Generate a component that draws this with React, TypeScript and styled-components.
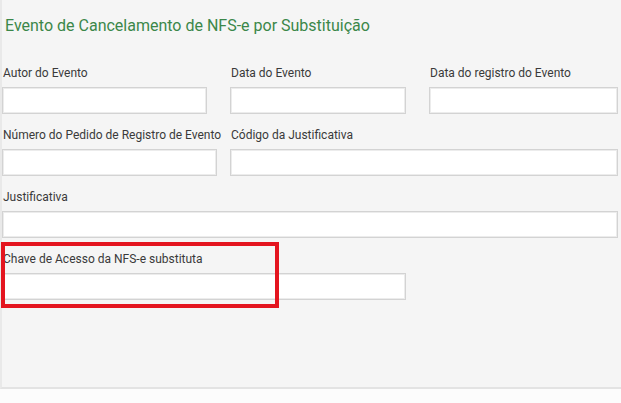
import React from 'react';
import styled, {createGlobalStyle} from 'styled-components';

const GlobalStyle = createGlobalStyle`
    html, body {
        margin: 0;
        padding: 0;
        background: #fcfcfc;
    }

    body {
        font-family: Roboto, "Liberation Sans", Arial, sans-serif;
    }
`;

const Panel = styled.section`
    box-sizing: border-box;
    height: 389px;
    padding-top: 16px;
    background-color: #f5f5f5;
    border-left: 2px solid #e9e9e9;
    border-bottom: 2px solid #e3e3e3;
`;

const Title = styled.h2`
    margin: 0 0 29px 3px;
    font-size: 16px;
    line-height: 20px;
    font-weight: 400;
    color: #3b8749;
`;

const Rows = styled.div`
    display: flex;
    flex-direction: column;
    gap: 13px;
`;

const Row = styled.div<{ $gap?: number }>`
    display: flex;
    gap: ${props => props.$gap ?? 0}px;
`;

const Field = styled.div<{ $width: number }>`
    position: relative;
    display: flex;
    flex-direction: column;
    gap: 6px;
    width: ${props => props.$width}px;
`;

const Label = styled.label`
    padding-left: 1px;
    font-size: 12px;
    line-height: 16px;
    color: #3a3a3a;
    white-space: nowrap;
`;

const Input = styled.input`
    box-sizing: border-box;
    height: 27px;
    width: 100%;
    margin: 0;
    padding: 0 6px;
    border: 1px solid #d3d3d3;
    box-shadow: inset 0 0 0 1px #ececec;
    background: #fff;
    outline: none;
`;

// highlight frame drawn over a field
const Highlight = styled.div`
    position: absolute;
    left: -1px;
    top: -9px;
    width: 278px;
    height: 66px;
    box-sizing: border-box;
    border: 4px solid #e4151f;
    pointer-events: none;
`;

const App: React.FC = () => {
    return (
        <>
            <GlobalStyle/>
            <Panel>
                <Title>Evento de Cancelamento de NFS-e por Substituição</Title>
                <Rows>
                    <Row $gap={23}>
                        <Field $width={205}>
                            <Label>Autor do Evento</Label>
                            <Input/>
                        </Field>
                        <Field $width={176}>
                            <Label>Data do Evento</Label>
                            <Input/>
                        </Field>
                        <Field $width={189}>
                            <Label>Data do registro do Evento</Label>
                            <Input/>
                        </Field>
                    </Row>
                    <Row $gap={13}>
                        <Field $width={215}>
                            <Label>Número do Pedido de Registro de Evento</Label>
                            <Input/>
                        </Field>
                        <Field $width={388}>
                            <Label>Código da Justificativa</Label>
                            <Input/>
                        </Field>
                    </Row>
                    <Row>
                        <Field $width={616}>
                            <Label>Justificativa</Label>
                            <Input/>
                        </Field>
                    </Row>
                    <Row>
                        <Field $width={404}>
                            <Label>Chave de Acesso da NFS-e substituta</Label>
                            <Input/>
                            <Highlight/>
                        </Field>
                    </Row>
                </Rows>
            </Panel>
        </>
    );
};

export default App;
